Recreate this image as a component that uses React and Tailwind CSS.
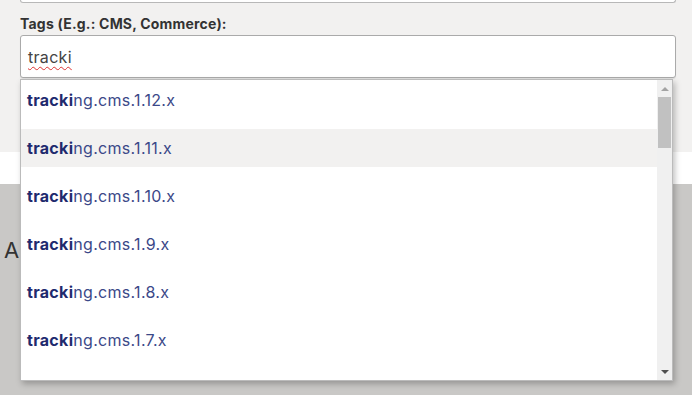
const items = ['1.12.x', '1.11.x', '1.10.x', '1.9.x', '1.8.x', '1.7.x']

export default function App() {
    return (
        <div className="relative w-[692px] h-[395px] overflow-hidden bg-[#c9c8c6] font-['Inter',sans-serif]">
            {/* form panel */}
            <div className="h-[153px] bg-[#f2f1f0] px-[20px] pr-[16px]">
                <div className="h-[4px] -mt-[1px] border border-t-0 border-[#b8b8b8] bg-white rounded-b-[3px]" />
                <div className="pt-[12px] text-[14px] font-bold text-[#333] leading-[18px] tracking-[0.2px]">
                    Tags (E.g.: CMS, Commerce):
                </div>
                <div className="mt-[2px] h-[43px] border border-[#aaa] rounded-[3px] bg-white flex items-center px-[7px] shadow-[0_1px_1px_rgba(0,0,0,0.08)]">
                    <span className="text-[16px] text-[#444] tracking-[0.3px] underline decoration-wavy decoration-[#d33] decoration-1 underline-offset-[3px]">
                        tracki
                    </span>
                </div>
            </div>
            <div className="h-[32px] bg-white" />
            <div className="pl-[4px] pt-[55px] text-[22px] text-[#333] leading-none">A</div>

            {/* autocomplete menu */}
            <div className="absolute left-[20px] top-[79px] w-[653px] h-[302px] bg-white border border-[#bbb] shadow-[2px_3px_6px_rgba(0,0,0,0.25)] flex">
                <div className="flex-1 flex flex-col gap-[10px] pt-[1px]">
                    {items.map((v, i) => (
                        <div
                            key={v}
                            className={`h-[38px] flex items-center px-[6px] text-[16px] tracking-[0.3px] ${i === 1 ? 'bg-[#f2f1f0]' : ''}`}
                        >
                            <span className="font-bold text-[#1f2a6e]">tracki</span>
                            <span className="text-[#3b4888]">ng.cms.{v}</span>
                        </div>
                    ))}
                </div>
                <div className="w-[15px] bg-[#f0f0f0] flex flex-col items-center">
                    <div className="h-[17px] flex items-center justify-center">
                        <div className="w-0 h-0 border-l-[4px] border-r-[4px] border-b-[4px] border-l-transparent border-r-transparent border-b-[#a3a3a3]" />
                    </div>
                    <div className="w-[13px] h-[51px] bg-[#c1c1c1]" />
                    <div className="flex-1" />
                    <div className="h-[17px] flex items-center justify-center">
                        <div className="w-0 h-0 border-l-[4px] border-r-[4px] border-t-[4px] border-l-transparent border-r-transparent border-t-[#505050]" />
                    </div>
                </div>
            </div>
        </div>
    )
}
